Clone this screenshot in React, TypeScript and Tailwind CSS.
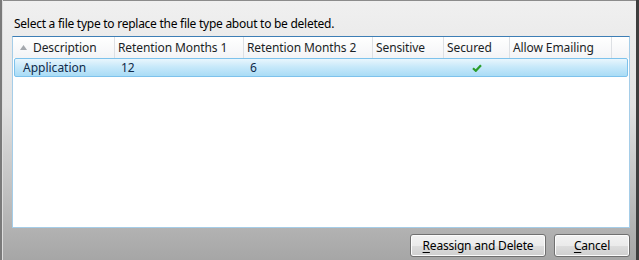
const columns = [
  { label: "Description", width: "w-[102px]", sort: true },
  { label: "Retention Months 1", width: "w-[129px]" },
  { label: "Retention Months 2", width: "w-[129px]" },
  { label: "Sensitive", width: "w-[71px]" },
  { label: "Secured", width: "w-[66px]" },
  { label: "Allow Emailing", width: "w-[102px]" },
]

function CheckMark() {
  return (
    <svg width="10" height="8" viewBox="0 0 10 8">
      <path d="M1 4.2 L3.8 6.8 L9 1.2" fill="none" stroke="#2a9d2a" strokeWidth="2.2" />
    </svg>
  )
}

function SortArrow() {
  return (
    <svg width="7" height="5" viewBox="0 0 7 5" className="mr-[6px]">
      <path d="M3.5 0 L7 5 L0 5 Z" fill="#a4a8ad" />
    </svg>
  )
}

function Button({ mnemonic, rest, width }: { mnemonic: string; rest: string; width: string }) {
  return (
    <button
      className={`${width} h-[23px] rounded-[3px] border border-[#707070] bg-[linear-gradient(#f2f2f2_0%,#ebebeb_50%,#dddddd_51%,#cfcfcf_100%)] text-[12px] tracking-[-0.2px] text-black shadow-[inset_0_0_0_1px_#fcfcfc]`}
    >
      <span className="underline underline-offset-2">{mnemonic}</span>
      {rest}
    </button>
  )
}

export default function App() {
  return (
    <div className="flex h-[260px] w-[639px] bg-[#d8d8d8] font-['Noto_Sans',sans-serif]">
      <div className="w-[2px] bg-[#7a7a7a]" />
      <div className="w-[1px] bg-[#dedede]" />
      <div className="flex flex-1 flex-col border-t border-[#8c8c8c] bg-[linear-gradient(#f0f0f0_0%,#e2e2e2_40%,#a6a6a6_100%)] pl-[9px] pr-[6px]">
        <div className="pl-[2px] pt-[15px] text-[12px] leading-[16px] tracking-[-0.26px] text-black">
          Select a file type to replace the file type about to be deleted.
        </div>
        <div className="mt-[4px] flex h-[192px] flex-col border border-t-[#3d7eb5] border-x-[#a5cde8] border-b-[#a5cde8] bg-white">
          <div className="flex h-[21px] bg-[linear-gradient(#ffffff,#f3f4f6)] text-[12px] tracking-[-0.1px] text-[#1a1f26]">
            {columns.map((c) => (
              <div
                key={c.label}
                className={`${c.width} flex items-center border-r border-[#dde0e4] ${c.sort ? "pl-[7px]" : "pl-[3px]"}`}
              >
                {c.sort && <SortArrow />}
                <span>{c.label}</span>
              </div>
            ))}
            <div className="flex-1" />
          </div>
          <div className="mx-[1px] flex h-[19px] items-center rounded-[2px] border border-[#7dc2ec] bg-[linear-gradient(#e9f6fd_0%,#c8e9fa_45%,#a9dcf6_100%)] text-[12px] text-[#102a4a]">
            <div className="w-[100px] pl-[8px]">Application</div>
            <div className="w-[129px] pl-[6px]">12</div>
            <div className="w-[129px] pl-[6px]">6</div>
            <div className="w-[71px]" />
            <div className="flex w-[66px] items-center justify-center pt-[1px]">
              <CheckMark />
            </div>
            <div className="flex-1" />
          </div>
        </div>
        <div className="mt-[6px] flex justify-end gap-[8px]">
          <Button mnemonic="R" rest="eassign and Delete" width="w-[136px]" />
          <Button mnemonic="C" rest="ancel" width="w-[76px]" />
        </div>
      </div>
      <div className="w-[3px] bg-[#3e3e3e]" />
    </div>
  )
}
